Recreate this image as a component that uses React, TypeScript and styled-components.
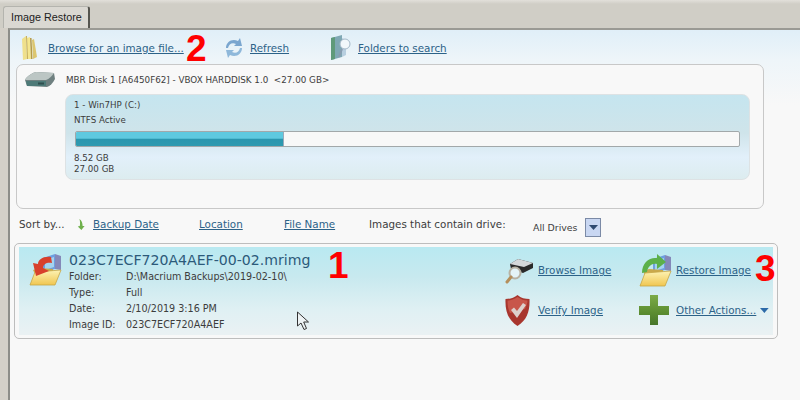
import React from "react";
import styled, { createGlobalStyle } from "styled-components";

const GlobalStyle = createGlobalStyle`
  html, body {
    margin: 0;
    padding: 0;
    background: #d4d0c8;
  }
  * {
    box-sizing: border-box;
  }
`;

const font = `"DejaVu Sans", "Noto Sans", sans-serif`;

const Screen = styled.div`
  position: relative;
  width: 800px;
  height: 400px;
  overflow: hidden;
  background: #d4d0c8;
  font-family: ${font};
  color: #3c3c3c;
`;

const TabRow = styled.div`
  height: 28px;
  padding: 6px 0 0 3px;
  background: linear-gradient(#e2e0da 0, #d0cec6 4px);
`;

const Tab = styled.div`
  width: 87px;
  height: 22px;
  padding: 4px 0 0 7px;
  background: #dad8d2;
  border: 1px solid #b4b4ae;
  border-right: 2px solid #55554f;
  border-bottom: none;
  border-radius: 3px 3px 0 0;
  font: 10.8px "Liberation Sans", sans-serif;
  color: #222;
`;

const Panel = styled.div`
  height: 372px;
  margin-left: 8px;
  border-top: 2px solid #9a9a94;
  border-left: 2px solid #8d8d88;
  background: linear-gradient(#e0eff8 0, #eef5f9 30px, #f8f8f8 75px);
`;

const Toolbar = styled.div`
  display: flex;
  align-items: center;
  height: 34px;
  padding: 2px 0 0 8px;
`;

const ToolItem = styled.div<{ $width: number; $gap: number }>`
  display: flex;
  align-items: center;
  gap: ${(p) => p.$gap}px;
  width: ${(p) => p.$width}px;
`;

const LinkText = styled.a`
  font-size: 10.35px;
  color: #2c6288;
  text-decoration: underline;
  white-space: nowrap;
`;

const DiskGroup = styled.div`
  width: 748px;
  height: 145px;
  margin-left: 6px;
  padding: 7px 14px 0 7px;
  background: #f8f8f8;
  border: 1px solid #c8c8c8;
  border-radius: 7px;
`;

const DiskHeader = styled.div`
  display: flex;
  align-items: center;
  gap: 10px;
  height: 16px;
  font-size: 8.77px;
  white-space: pre;
`;

const Partition = styled.div`
  width: 685px;
  height: 86px;
  margin: 6px 0 0 41px;
  padding: 3px 9px 0 9px;
  border: 1px solid #dde2e4;
  border-radius: 8px;
  background: linear-gradient(#c5e5ef 0, #cfe4ea 38px, #e2f0fa 62px, #dcecee 86px);
  font-size: 8.7px;
`;

const PartLine = styled.div<{ $height: number }>`
  height: ${(p) => p.$height}px;
  margin-left: -1px;
  line-height: ${(p) => p.$height}px;
`;

const Bar = styled.div`
  height: 16px;
  margin: 3px 0 6px 0;
  background: #f8f8f8;
  border: 1px solid #a2a8aa;
  border-radius: 2px;
  overflow: hidden;
`;

const BarFill = styled.div`
  height: 100%;
  background: linear-gradient(#5ec9df 0, #5ec9df 45%, #2a96ae 50%, #2f9ab0 100%);
  border-right: 1px solid #99aabb;
`;

const SortRow = styled.div`
  display: flex;
  align-items: center;
  height: 33px;
  margin-top: 1px;
  padding: 0 0 5px 9px;
  font-size: 10.35px;
`;

const SortCell = styled.div<{ $width: number }>`
  display: flex;
  align-items: center;
  gap: 8px;
  width: ${(p) => p.$width}px;
  white-space: nowrap;
`;

const DriveSelect = styled.div`
  display: flex;
  align-items: center;
  justify-content: space-between;
  width: 72px;
  height: 20px;
  margin-top: 6px;
  padding: 0 1px 0 3px;
  font-size: 9.4px;
`;

const DropButton = styled.div`
  display: flex;
  align-items: center;
  justify-content: center;
  width: 16px;
  height: 19px;
  background: #c9d7f2;
  border: 1px solid #7b8aa6;
`;

const Card = styled.div`
  width: 764px;
  height: 96px;
  margin-left: 4px;
  padding: 3px 4px;
  background: #f8f8f8;
  border: 1px solid #bdbdbd;
  border-radius: 5px;
`;

const CardInner = styled.div`
  display: flex;
  height: 88px;
  padding: 0 0 0 10px;
  background: linear-gradient(#b9e9f1 0, #c8e9ef 30px, #dff0f3 62px, #eaf1f3 88px);
`;

const FileIcon = styled.div`
  width: 40px;
  padding-top: 5px;
`;

const FileInfo = styled.div`
  width: 436px;
  font-size: 9.6px;
`;

const FileName = styled.div`
  height: 22px;
  padding-top: 3px;
  font-size: 14.1px;
  line-height: 20px;
  color: #2c5a7a;
  white-space: nowrap;
`;

const InfoRow = styled.div`
  display: flex;
  height: 16px;
  line-height: 16px;
  white-space: nowrap;
`;

const InfoLabel = styled.div`
  width: 57px;
`;

const Actions = styled.div`
  display: grid;
  grid-template-columns: 134px 130px;
  grid-template-rows: 40px 40px;
  margin-top: 3px;
`;

const Action = styled.div`
  display: flex;
  align-items: center;
  gap: 4px;
`;

const ActionIcon = styled.div<{ $width: number }>`
  display: flex;
  flex: none;
  width: ${(p) => p.$width}px;
`;

const Mark = styled.div<{ $x: number; $y: number }>`
  position: absolute;
  left: ${(p) => p.$x}px;
  top: ${(p) => p.$y}px;
  font: bold 37px/37px "Liberation Sans", sans-serif;
  color: #f00;
`;

const Cursor = styled.svg`
  position: absolute;
  left: 296px;
  top: 311px;
`;

const YellowFolderIcon = () => (
  <svg width="22" height="26" viewBox="0 0 22 26">
    <path d="M4 4 L8 1 L9 24 L5 25 Z" fill="#efe08c" />
    <path d="M9 3 L12 2 L13 24 L9 24 Z" fill="#f4e68f" />
    <path d="M12 3 L13.5 3 L14.5 24 L13 24 Z" fill="#b49a4a" />
    <path d="M14 5 L16 4 L19 22 L15 24 Z" fill="#dcc670" />
    <path d="M8 1 L9 1 L10 24 L9 24 Z" fill="#c4ad5c" />
  </svg>
);

const RefreshIcon = () => (
  <svg width="20" height="22" viewBox="0 0 20 22">
    <path d="M2 11 C2 5 8 1 14 4 L16 1 L18 9 L10 9 L12 7 C8 5 5 7 4 11 Z" fill="#7aa6cf" />
    <path d="M18 11 C18 17 12 21 6 18 L4 21 L2 13 L10 13 L8 15 C12 17 15 15 16 11 Z" fill="#8fb8da" />
  </svg>
);

const FoldersSearchIcon = () => (
  <svg width="22" height="26" viewBox="0 0 22 26">
    <path d="M1 3 L12 0 L12 22 L1 25 Z" fill="#7fa8b4" />
    <path d="M1 3 L5 2 L5 24 L1 25 Z" fill="#5f9a7a" />
    <path d="M12 3 L16 5 L16 20 L12 22 Z" fill="#b8cfe0" />
    <circle cx="15" cy="9" r="5" fill="#f2f8fb" stroke="#a4b8c8" strokeWidth="1" />
    <path d="M12 14 L9 22" stroke="#8a9cb0" strokeWidth="2" />
  </svg>
);

const DiskIcon = () => (
  <svg width="32" height="18" viewBox="0 0 32 18">
    <path d="M1 9 C3 5 8 2 12 1 L30 2 L31 8 C29 12 26 15 23 16 L3 15 Z" fill="#6f8080" />
    <path d="M1 9 C3 5 8 2 12 1 L30 2 C28 5 25 8 22 9 Z" fill="#bcc6c4" />
    <path d="M2 10 L22 10 L22 15 L3 15 Z" fill="#4e7a78" />
    <rect x="14" y="11.5" width="6" height="2" fill="#2f4f4e" />
  </svg>
);

const SortArrow = () => (
  <svg width="8" height="13" viewBox="0 0 10 14">
    <path d="M3 0 C6 2 7 5 7 9 L9.5 9 L5.5 14 L1 9.5 L3.5 9 C4 6 4 3 3 0 Z" fill="#6fb04c" />
  </svg>
);

const ArrowDown = ({ color = "#2f4a70" }: { color?: string }) => (
  <svg width="9" height="5" viewBox="0 0 9 5">
    <path d="M0 0 L9 0 L4.5 5 Z" fill={color} />
  </svg>
);

const OpenFolderIcon = ({ arrow, color }: { arrow: string; color: string }) => (
  <svg width="33" height="34" viewBox="0 0 33 34">
    <defs>
      <linearGradient id="folderFront" x1="0" y1="0" x2="0" y2="1">
        <stop offset="0" stopColor="#fdf3b4" />
        <stop offset="1" stopColor="#f0c650" />
      </linearGradient>
    </defs>
    <path d="M14 6 L26 2 L26 17 L14 20 Z" fill="#6e9fe0" />
    <path d="M26 2 L32 4 L32 18 L26 17 Z" fill="#8489b9" />
    <path d="M16 8 L25 5 L25 15 L16 18 Z" fill="#a4d4ef" />
    <path d="M4 18 L10 16 L24 17 L24 20 L6 22 Z" fill="#c9a94c" />
    <path d="M6 20 L32 18 L26 33 L1 33 Z" fill="url(#folderFront)" stroke="#c7a645" strokeWidth="0.8" />
    <path d={arrow} fill={color} />
  </svg>
);

const BrowseIcon = () => (
  <svg width="29" height="29" viewBox="0 0 29 29">
    <path d="M5 8 L13 3 L28 7 L28 12 L18 17 L6 13 Z" fill="#2a2a2a" />
    <path d="M5 8 L13 3 L28 7 L19 11 Z" fill="#d5d8da" />
    <circle cx="10" cy="17" r="5.5" fill="#e4f4f8" stroke="#b7b2a4" strokeWidth="2" />
    <path d="M6 21 L2 26" stroke="#b58f5c" strokeWidth="3" strokeLinecap="round" />
  </svg>
);

const ShieldIcon = () => (
  <svg width="25" height="31" viewBox="0 0 25 31">
    <path d="M12.5 0 C16 3 20 4 24.5 4 C25 16 22 25 12.5 31 C3 25 0 16 0.5 4 C5 4 9 3 12.5 0 Z" fill="#a8362e" />
    <path d="M12.5 2 C9 4.5 5 5.5 2.5 5.5 C2.5 10 3 14 5 18 L20 14 C21.5 11 22.5 8 22.5 5.5 C19 5.5 16 4.5 12.5 2 Z" fill="#c8564a" />
    <path d="M6 15 L9 12.5 L12 16 L18 8 L21 10 L12 23 Z" fill="#ddd0cc" />
  </svg>
);

const PlusIcon = () => (
  <svg width="30" height="30" viewBox="0 0 30 30">
    <defs>
      <linearGradient id="plusFill" x1="0" y1="0" x2="0" y2="1">
        <stop offset="0" stopColor="#7cab48" />
        <stop offset="0.6" stopColor="#5b8c30" />
        <stop offset="1" stopColor="#47752a" />
      </linearGradient>
    </defs>
    <path d="M11 0 L19 0 L19 11 L30 11 L30 20 L19 20 L19 30 L11 30 L11 20 L0 20 L0 11 L11 11 Z" fill="url(#plusFill)" />
  </svg>
);

const redArrow = "M22 5 C14 4 9 8 9 12 L4 11 L7 24 L20 19 L14 16 C14 12 18 10 23 11 Z";
const greenArrow = "M3 20 C3 10 10 4 18 5 L18 1 L27 9 L18 16 L18 11 C13 10 9 13 8 19 Z";

const App = () => {
  return (
    <Screen>
      <GlobalStyle />
      <TabRow>
        <Tab>Image Restore</Tab>
      </TabRow>
      <Panel>
        <Toolbar>
          <ToolItem $width={206} $gap={8}>
            <YellowFolderIcon />
            <LinkText>Browse for an image file...</LinkText>
          </ToolItem>
          <ToolItem $width={106} $gap={6}>
            <RefreshIcon />
            <LinkText>Refresh</LinkText>
          </ToolItem>
          <ToolItem $width={160} $gap={6}>
            <FoldersSearchIcon />
            <LinkText>Folders to search</LinkText>
          </ToolItem>
        </Toolbar>
        <DiskGroup>
          <DiskHeader>
            <DiskIcon />
            <span>MBR Disk 1 [A6450F62] - VBOX HARDDISK 1.0  &lt;27.00 GB&gt;</span>
          </DiskHeader>
          <Partition>
            <PartLine $height={15}>1 - Win7HP (C:)</PartLine>
            <PartLine $height={15}>NTFS Active</PartLine>
            <Bar>
              <BarFill style={{ width: "31.3%" }} />
            </Bar>
            <PartLine $height={11}>8.52 GB</PartLine>
            <PartLine $height={11}>27.00 GB</PartLine>
          </Partition>
        </DiskGroup>
        <SortRow>
          <SortCell $width={58}>Sort by...</SortCell>
          <SortCell $width={122}>
            <SortArrow />
            <LinkText>Backup Date</LinkText>
          </SortCell>
          <SortCell $width={85}>
            <LinkText>Location</LinkText>
          </SortCell>
          <SortCell $width={85}>
            <LinkText>File Name</LinkText>
          </SortCell>
          <SortCell $width={161}>Images that contain drive:</SortCell>
          <DriveSelect>
            All Drives
            <DropButton>
              <ArrowDown />
            </DropButton>
          </DriveSelect>
        </SortRow>
        <Card>
          <CardInner>
            <FileIcon>
              <OpenFolderIcon arrow={redArrow} color="#d8402c" />
            </FileIcon>
            <FileInfo>
              <FileName>023C7ECF720A4AEF-00-02.mrimg</FileName>
              <InfoRow>
                <InfoLabel>Folder:</InfoLabel>D:\Macrium Backups\2019-02-10\
              </InfoRow>
              <InfoRow>
                <InfoLabel>Type:</InfoLabel>Full
              </InfoRow>
              <InfoRow>
                <InfoLabel>Date:</InfoLabel>2/10/2019 3:16 PM
              </InfoRow>
              <InfoRow>
                <InfoLabel>Image ID:</InfoLabel>023C7ECF720A4AEF
              </InfoRow>
            </FileInfo>
            <Actions>
              <Action>
                <ActionIcon $width={29}>
                  <BrowseIcon />
                </ActionIcon>
                <LinkText>Browse Image</LinkText>
              </Action>
              <Action>
                <ActionIcon $width={33}>
                  <OpenFolderIcon arrow={greenArrow} color="#5cb04a" />
                </ActionIcon>
                <LinkText>Restore Image</LinkText>
              </Action>
              <Action>
                <ActionIcon $width={29}>
                  <ShieldIcon />
                </ActionIcon>
                <LinkText>Verify Image</LinkText>
              </Action>
              <Action>
                <ActionIcon $width={33}>
                  <PlusIcon />
                </ActionIcon>
                <LinkText>Other Actions...</LinkText>
                <ArrowDown color="#2c6aa8" />
              </Action>
            </Actions>
          </CardInner>
        </Card>
      </Panel>
      <Mark $x={186} $y={30}>2</Mark>
      <Mark $x={328} $y={247}>1</Mark>
      <Mark $x={755} $y={250}>3</Mark>
      <Cursor width="14" height="20" viewBox="0 0 14 20">
        <path d="M1.5 1 L1.5 15 L5 12 L8 18.5 L10.5 17.5 L7.7 11 L12.5 11 Z" fill="#eef3f4" stroke="#333" strokeWidth="1" />
      </Cursor>
    </Screen>
  );
};

export default App;
